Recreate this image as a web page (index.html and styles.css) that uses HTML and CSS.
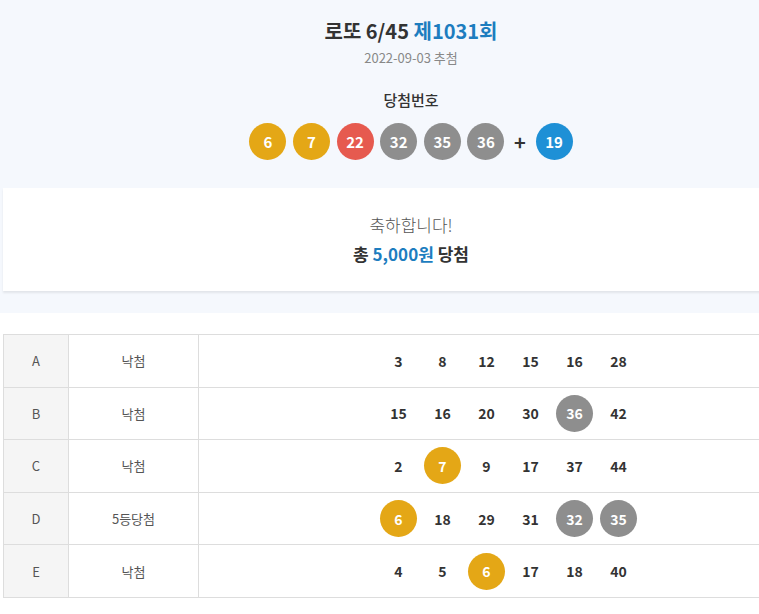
FILE: index.html
```html
<!DOCTYPE html>
<html>
    <head>
        <meta charset="utf-8">
        <title>로또 6/45 제1031회 결과</title>
        <link rel="stylesheet" href="styles.css">
    </head>
    <body>
        <div class="page">
            <section class="draw">
                <h1 class="title">로또 6/45 <span class="round">제1031회</span></h1>
                <p class="date">2022-09-03 추첨</p>
                <h2 class="subtitle">당첨번호</h2>
                <div class="balls">
                    <span class="ball yellow">6</span>
                    <span class="ball yellow">7</span>
                    <span class="ball red">22</span>
                    <span class="ball gray">32</span>
                    <span class="ball gray">35</span>
                    <span class="ball gray">36</span>
                    <span class="plus">+</span>
                    <span class="ball blue">19</span>
                </div>
                <div class="result">
                    <p class="congrats">축하합니다!</p>
                    <p class="prize">총 <span class="amount">5,000원</span> 당첨</p>
                </div>
            </section>

            <table class="tickets">
                <tr>
                    <th>A</th>
                    <td class="rank">낙첨</td>
                    <td class="nums">
                        <div class="row">
                            <span class="num">3</span><span class="num">8</span><span class="num">12</span><span class="num">15</span><span class="num">16</span><span class="num">28</span>
                        </div>
                    </td>
                </tr>
                <tr>
                    <th>B</th>
                    <td class="rank">낙첨</td>
                    <td class="nums">
                        <div class="row">
                            <span class="num">15</span><span class="num">16</span><span class="num">20</span><span class="num">30</span><span class="num ball gray">36</span><span class="num">42</span>
                        </div>
                    </td>
                </tr>
                <tr>
                    <th>C</th>
                    <td class="rank">낙첨</td>
                    <td class="nums">
                        <div class="row">
                            <span class="num">2</span><span class="num ball yellow">7</span><span class="num">9</span><span class="num">17</span><span class="num">37</span><span class="num">44</span>
                        </div>
                    </td>
                </tr>
                <tr>
                    <th>D</th>
                    <td class="rank">5등당첨</td>
                    <td class="nums">
                        <div class="row">
                            <span class="num ball yellow">6</span><span class="num">18</span><span class="num">29</span><span class="num">31</span><span class="num ball gray">32</span><span class="num ball gray">35</span>
                        </div>
                    </td>
                </tr>
                <tr>
                    <th>E</th>
                    <td class="rank">낙첨</td>
                    <td class="nums">
                        <div class="row">
                            <span class="num">4</span><span class="num">5</span><span class="num ball yellow">6</span><span class="num">17</span><span class="num">18</span><span class="num">40</span>
                        </div>
                    </td>
                </tr>
            </table>
        </div>
    </body>
</html>
```

FILE: styles.css
```css
html {
    font-size: 14px;
    font-family: "Noto Sans CJK KR", "Noto Sans", sans-serif;
}

body {
    margin: 0;
    color: #333;
    background: #fff;
    overflow: hidden;
}

* {
    box-sizing: border-box;
}

p,
h1,
h2 {
    margin: 0;
}

.page {
    width: 822px;
}

.draw {
    background: #f5f8fd;
    padding: 17px 3px 22px;
    text-align: center;
}

.title {
    font-size: 20px;
    line-height: 28px;
    font-weight: 700;
    color: #333;
}

.round {
    color: #1d7dbf;
}

.date {
    font-size: 13px;
    line-height: 20px;
    margin-top: 3px;
    color: #888;
}

.subtitle {
    font-size: 15px;
    line-height: 22px;
    font-weight: 500;
    margin-top: 21px;
    color: #333;
}

.balls {
    display: flex;
    justify-content: center;
    align-items: center;
    gap: 6.6px;
    margin-top: 12px;
}

.ball {
    display: inline-flex;
    align-items: center;
    justify-content: center;
    width: 37px;
    height: 37px;
    border-radius: 50%;
    color: #fff;
    font-weight: 700;
    font-size: 15px;
}

.yellow {
    background: #e4a716;
}

.red {
    background: #e65a4f;
}

.gray {
    background: #8e8e8e;
}

.blue {
    background: #1e90d6;
}

.plus {
    width: 14px;
    margin: 0 2px;
    font-size: 20px;
    font-weight: 700;
    color: #333;
}

.result {
    margin-top: 28px;
    height: 103px;
    background: #fff;
    box-shadow: 0 2px 2px rgba(0, 0, 0, 0.08);
    padding-top: 24px;
}

.congrats {
    font-size: 17px;
    line-height: 26px;
    font-weight: 300;
    color: #555;
}

.prize {
    margin-top: 3px;
    font-size: 17px;
    line-height: 26px;
    font-weight: 700;
    color: #333;
}

.amount {
    color: #1d7dbf;
}

.tickets {
    margin: 21px 3px 0;
    width: 816px;
    border-collapse: collapse;
    border-top: 1px solid #ddd;
    table-layout: fixed;
}

.tickets th,
.tickets td {
    height: 52.6px;
    padding: 0;
    border: 1px solid #ddd;
    text-align: center;
    font-size: 13px;
    font-weight: 400;
    color: #555;
}

.tickets th {
    width: 65px;
    background: #f5f5f5;
}

.tickets .rank {
    width: 130px;
}

.row {
    display: flex;
    justify-content: center;
    gap: 7px;
}

.num {
    display: inline-flex;
    align-items: center;
    justify-content: center;
    width: 37px;
    height: 37px;
    font-size: 14px;
    font-weight: 700;
    color: #333;
}

.num.ball {
    color: #fff;
}
```
